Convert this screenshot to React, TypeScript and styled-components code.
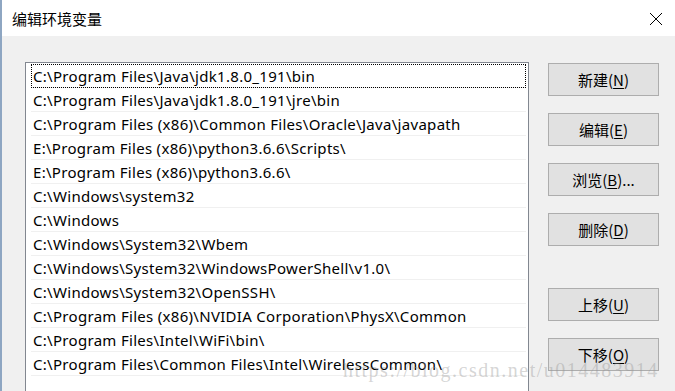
import styled, { createGlobalStyle } from 'styled-components';

const GlobalStyle = createGlobalStyle`
	html, body {
		margin: 0;
		padding: 0;
		background: #f0f0f0;
		overflow: hidden;
	}
	body {
		font-family: "Noto Sans", "Noto Sans CJK SC", sans-serif;
	}
`;

const Window = styled.div`
	position: relative;
	width: 675px;
	height: 391px;
	background: #f0f0f0;
	border-left: 2px solid #8ea6c2;
	box-sizing: border-box;
	overflow: hidden;
`;

const TitleBar = styled.div`
	height: 36px;
	background: #ffffff;
	display: flex;
	align-items: center;
	justify-content: space-between;
	padding: 0 12px 0 10px;
`;

const Title = styled.div`
	font-family: "Noto Sans CJK SC", sans-serif;
	font-size: 15px;
	color: #000000;
	margin-top: 1px;
`;

const CloseButton = styled.div`
	width: 14px;
	height: 14px;
	display: flex;
	margin-top: 2px;
`;

const Body = styled.div`
	display: flex;
	padding: 26px 0 0 23px;
	gap: 19px;
`;

const ListBox = styled.div`
	width: 504px;
	height: 340px;
	background: #ffffff;
	border: 1px solid #828790;
	border-bottom: none;
	box-sizing: border-box;
	padding: 1px 1px 0 1px;
`;

const Row = styled.div<{ $focused?: boolean }>`
	height: 24px;
	box-sizing: border-box;
	border-bottom: 1px solid #f0f0f0;
	display: flex;
	align-items: center;
	margin: 0 1px 0 4px;
	padding-left: 2px;
	font-size: 15px;
	letter-spacing: 0.3px;
	color: #000000;
	white-space: nowrap;
	outline: ${(p) => (p.$focused ? '1px dotted #000000' : 'none')};
	outline-offset: -1px;
`;

const Buttons = styled.div`
	display: flex;
	flex-direction: column;
	width: 111px;
	margin-top: 1px;
`;

const Button = styled.div<{ $gap?: number }>`
	height: 33px;
	box-sizing: border-box;
	background: #e1e1e1;
	border: 1px solid #adadad;
	display: flex;
	align-items: center;
	justify-content: center;
	font-family: "Noto Sans CJK SC", sans-serif;
	font-size: 15px;
	color: #000000;
	margin-top: ${(p) => p.$gap ?? 0}px;
	u {
		text-decoration: underline;
		text-underline-offset: 2px;
	}
`;

const Watermark = styled.div`
	position: absolute;
	left: 341px;
	top: 359px;
	font-family: "Liberation Serif", serif;
	font-size: 20px;
	letter-spacing: 1.5px;
	color: rgba(150, 150, 150, 0.4);
	pointer-events: none;
	white-space: nowrap;
`;

const paths = [
	'C:\\Program Files\\Java\\jdk1.8.0_191\\bin',
	'C:\\Program Files\\Java\\jdk1.8.0_191\\jre\\bin',
	'C:\\Program Files (x86)\\Common Files\\Oracle\\Java\\javapath',
	'E:\\Program Files (x86)\\python3.6.6\\Scripts\\',
	'E:\\Program Files (x86)\\python3.6.6\\',
	'C:\\Windows\\system32',
	'C:\\Windows',
	'C:\\Windows\\System32\\Wbem',
	'C:\\Windows\\System32\\WindowsPowerShell\\v1.0\\',
	'C:\\Windows\\System32\\OpenSSH\\',
	'C:\\Program Files (x86)\\NVIDIA Corporation\\PhysX\\Common',
	'C:\\Program Files\\Intel\\WiFi\\bin\\',
	'C:\\Program Files\\Common Files\\Intel\\WirelessCommon\\',
];

const buttons = [
	{ label: '新建', key: 'N', gap: 0 },
	{ label: '编辑', key: 'E', gap: 17 },
	{ label: '浏览', key: 'B', gap: 17, suffix: '...' },
	{ label: '删除', key: 'D', gap: 17 },
	{ label: '上移', key: 'U', gap: 42 },
	{ label: '下移', key: 'O', gap: 17 },
];

export default function App() {
	return (
		<>
			<GlobalStyle />
			<Window>
				<TitleBar>
					<Title>编辑环境变量</Title>
					<CloseButton>
						<svg width="14" height="14" viewBox="0 0 14 14">
							<path d="M1 1 L13 13 M13 1 L1 13" stroke="#000" strokeWidth="1" />
						</svg>
					</CloseButton>
				</TitleBar>
				<Body>
					<ListBox>
						{paths.map((p, i) => (
							<Row key={i} $focused={i === 0}>
								{p}
							</Row>
						))}
					</ListBox>
					<Buttons>
						{buttons.map((b) => (
							<Button key={b.key} $gap={b.gap}>
								{b.label}(<u>{b.key}</u>){b.suffix}
							</Button>
						))}
					</Buttons>
				</Body>
				<Watermark>https://blog.csdn.net/u014483914</Watermark>
			</Window>
		</>
	);
}
